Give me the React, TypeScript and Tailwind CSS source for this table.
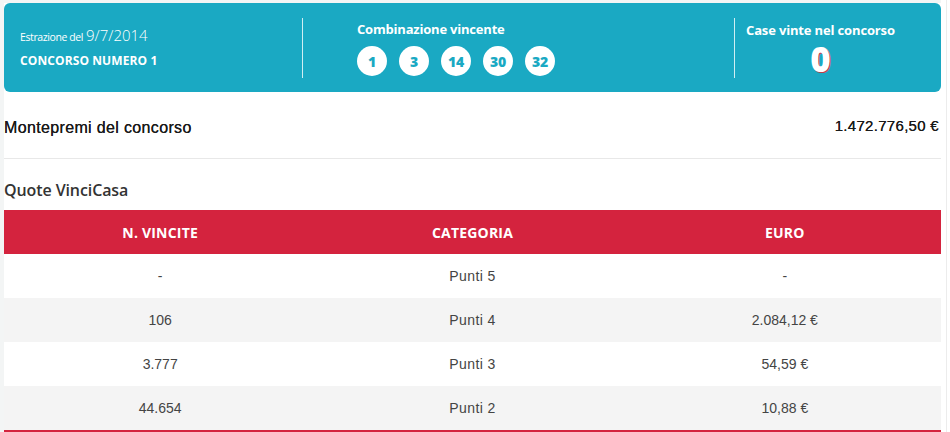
import React from "react";

const rows = [
  { n: "-", c: "Punti 5", e: "-" },
  { n: "106", c: "Punti 4", e: "2.084,12 €" },
  { n: "3.777", c: "Punti 3", e: "54,59 €" },
  { n: "44.654", c: "Punti 2", e: "10,88 €" },
];

const balls = ["1", "3", "14", "30", "32"];

const geo = { fontFamily: "'Open Sans', Lato, sans-serif" };
const arial = { fontFamily: "'Liberation Sans', Arial, sans-serif" };

export default function App() {
  return (
    <div className="w-[950px] h-[432px] overflow-hidden bg-white flex">
      <div className="w-[4px] bg-[#f3f5f5] shrink-0" />
      <div className="w-[943px] shrink-0 border-r border-[#ececec] bg-white">
        <div className="h-[3px] bg-[#f3f5f5] w-[937px]" />
        {/* Top panel */}
        <div
          className="w-[937px] h-[89px] rounded-[6px] bg-[#1aa9c3] flex items-center text-white"
          style={geo}
        >
          <div className="w-[298px] pl-[16px] flex flex-col">
            <div className="flex items-baseline leading-none">
              <span className="text-[10.5px] tracking-[-0.4px]">Estrazione del</span>
              <span className="text-[15px] ml-[3px] font-light">9/7/2014</span>
            </div>
            <div className="mt-[12px] text-[12px] font-bold tracking-[0.1px] leading-none">
              CONCORSO NUMERO 1
            </div>
          </div>
          <div className="w-px h-[60px] bg-white/80" />
          <div className="w-[431px] pl-[54px] flex flex-col self-start pt-[20px]">
            <div className="text-[13px] font-bold leading-none tracking-[-0.2px]">
              Combinazione vincente
            </div>
            <div className="flex gap-[12px] mt-[10px]">
              {balls.map((b) => (
                <div
                  key={b}
                  className="w-[30px] h-[30px] rounded-full bg-white text-[#1aa9c3] flex items-center justify-center text-[14px] font-extrabold tracking-[-0.3px]"
                >
                  {b}
                </div>
              ))}
            </div>
          </div>
          <div className="w-px h-[60px] bg-white/80" />
          <div className="pl-[11px] flex flex-col items-center self-start pt-[21px]">
            <div className="text-[13px] font-bold leading-none tracking-[-0.15px]">
              Case vinte nel concorso
            </div>
            <div
              className="text-[35px] font-extrabold leading-none mt-[4px]"
              style={{ textShadow: "1px 1px 0 #c0404a" }}
            >
              0
            </div>
          </div>
        </div>

        {/* Montepremi */}
        <div
          className="w-[937px] h-[67px] flex items-center justify-between border-b border-[#e8e8e8] text-[#1a1a1a]"
          style={arial}
        >
          <span className="pt-[6px] text-[16px] tracking-[0.35px] [text-shadow:0_0_0.5px_#1a1a1a]">
            Montepremi del concorso
          </span>
          <span className="pt-[3px] pr-[2px] text-[15px] tracking-[0.3px] [text-shadow:0_0_0.5px_#1a1a1a]">
            1.472.776,50 €
          </span>
        </div>

        <div
          className="w-[937px] h-[51px] flex items-center text-[16px] font-semibold text-[#333] pt-[11px] tracking-[-0.1px]"
          style={geo}
        >
          Quote VinciCasa
        </div>

        {/* Table */}
        <div className="w-[937px] border-b-[3px] border-[#d4233e]">
          <div
            className="grid grid-cols-3 h-[44px] bg-[#d4233e] text-white text-[14px] font-bold items-center text-center tracking-[0.2px]"
            style={geo}
          >
            <div>N. VINCITE</div>
            <div>CATEGORIA</div>
            <div>EURO</div>
          </div>
          {rows.map((r, i) => (
            <div
              key={r.c}
              className={`grid grid-cols-3 h-[44px] items-center text-center text-[14px] text-[#444] ${
                i % 2 === 1 ? "bg-[#f4f4f4]" : "bg-white"
              }`}
              style={arial}
            >
              <div>{r.n}</div>
              <div className="tracking-[0.4px]">{r.c}</div>
              <div>{r.e}</div>
            </div>
          ))}
        </div>
      </div>
    </div>
  );
}
